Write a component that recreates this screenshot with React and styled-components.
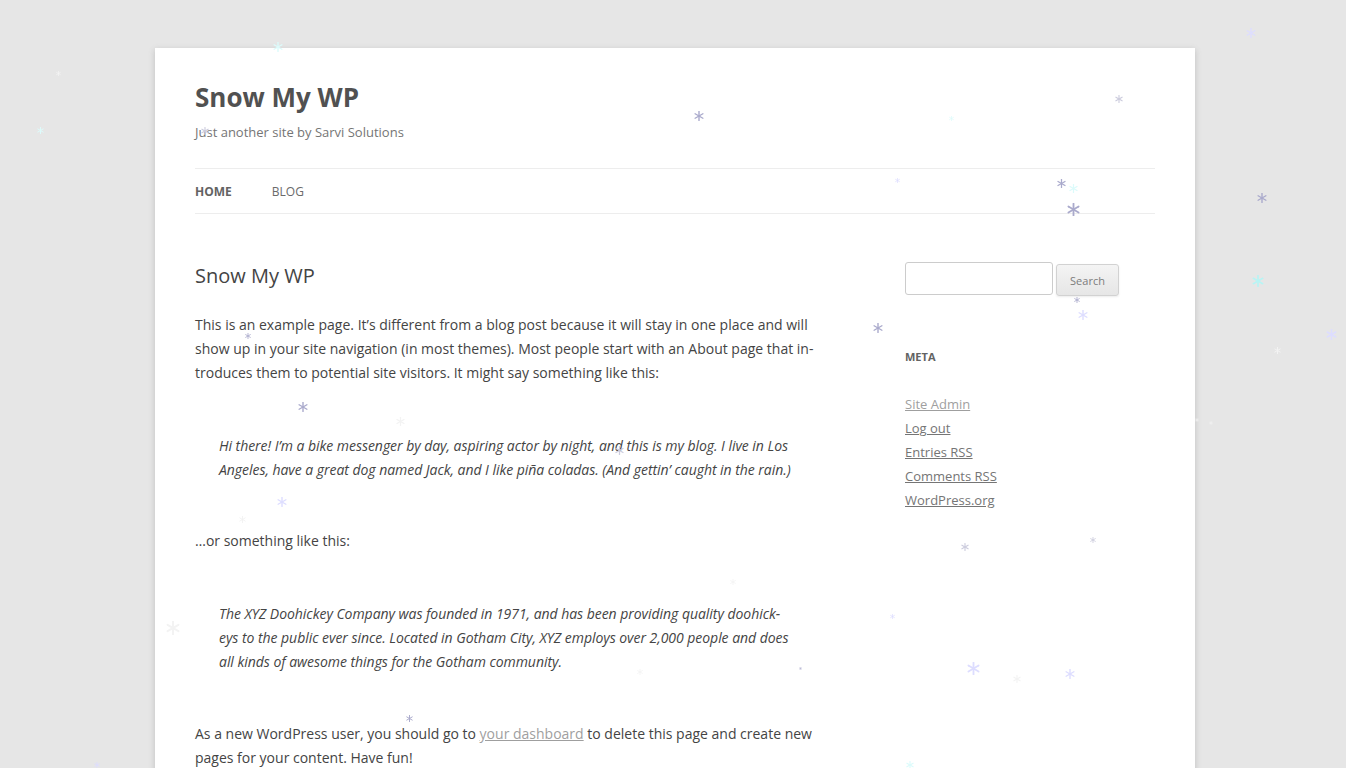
import React from 'react';
import styled, { createGlobalStyle } from 'styled-components';

const GlobalStyle = createGlobalStyle`
  html, body {
    margin: 0;
    padding: 0;
  }
  body {
    background: #e6e6e6;
    color: #444;
    font-family: "Open Sans", Helvetica, Arial, sans-serif;
    font-size: 14px;
    line-height: 1.714285714;
    overflow: hidden;
  }
`;

const Site = styled.div`
  width: 960px;
  margin: 48px 0 48px calc(50% - 518px);
  padding: 0 40px;
  background: #fff;
  box-shadow: 0 2px 6px rgba(100, 100, 100, 0.3);
`;

const Header = styled.header`
  padding: 24px 0;
`;

const SiteTitle = styled.h1`
  margin: 8px 0 6px;
  font-size: 26px;
  line-height: 34px;
  font-weight: 700;
  color: #515151;
`;

const Tagline = styled.h2`
  margin: 0;
  font-size: 13px;
  line-height: 24px;
  font-weight: 400;
  color: #757575;
`;

const Nav = styled.nav`
  margin-top: 24px;
  border-top: 1px solid #ededed;
  border-bottom: 1px solid #ededed;
  display: flex;
  gap: 40px;
`;

const NavItem = styled.a`
  padding-top: 1px;
  font-size: 12px;
  line-height: 43px;
  text-transform: uppercase;
  text-decoration: none;
  color: ${(p) => (p.$current ? '#636363' : '#6a6a6a')};
  font-weight: ${(p) => (p.$current ? 700 : 400)};
`;

const Main = styled.div`
  margin-top: 24px;
  display: flex;
  justify-content: space-between;
  align-items: flex-start;
`;

const Primary = styled.article`
  width: 625px;
`;

const EntryTitle = styled.h1`
  margin: 1px 0 24px;
  font-size: 20px;
  line-height: 26px;
  font-weight: 400;
  color: #444;
`;

const Para = styled.p`
  margin: 0 0 24px;
  white-space: nowrap;
`;

const Quote = styled.blockquote`
  margin: 0;
  padding: 25px 24px ${(p) => p.$bottom}px;
  font-style: italic;
  letter-spacing: -0.04px;
`;

const TextLink = styled.a`
  color: #9f9f9f;
  text-decoration: underline;
`;

const Sidebar = styled.aside`
  width: 250px;
`;

const SearchForm = styled.form`
  display: flex;
  align-items: flex-start;
  gap: 3px;
  margin-bottom: 49px;
`;

const SearchInput = styled.input`
  box-sizing: border-box;
  width: 148px;
  height: 33px;
  padding: 6px;
  border: 1px solid #ccc;
  border-radius: 3px;
  font-family: inherit;
  font-size: 13px;
  color: #444;
`;

const SearchButton = styled.button`
  box-sizing: border-box;
  margin-top: 2px;
  width: 63px;
  height: 32px;
  padding: 0 10px;
  font-family: inherit;
  font-size: 11px;
  color: #7c7c7c;
  background: linear-gradient(to bottom, #f4f4f4, #e6e6e6);
  border: 1px solid #d2d2d2;
  border-radius: 3px;
  box-shadow: 0 1px 2px rgba(64, 64, 64, 0.1);
`;

const WidgetTitle = styled.h3`
  margin: 0 0 23px;
  font-size: 11px;
  line-height: 24px;
  font-weight: 700;
  text-transform: uppercase;
  color: #636363;
`;

const WidgetList = styled.ul`
  margin: 0;
  padding: 0;
  list-style: none;
`;

const WidgetItem = styled.li`
  font-size: 13px;
  line-height: 24px;
`;

const WidgetLink = styled.a`
  color: ${(p) => (p.$visited ? '#9f9f9f' : '#757575')};
  text-decoration: underline;
`;

const Snow = styled.div`
  position: fixed;
  inset: 0;
  pointer-events: none;
  overflow: hidden;
`;

const Flake = styled.svg`
  position: absolute;
  left: ${(p) => p.$x - p.$s / 2}px;
  top: ${(p) => p.$y - p.$s / 2}px;
  width: ${(p) => p.$s}px;
  height: ${(p) => p.$s}px;
  color: ${(p) => p.$c};
`;

const A = '#aaaacc';
const D = '#ddddff';
const C = '#ccccdd';
const W = '#f3f3f3';
const Y = '#dcfbfb';
const YB = '#b8f4f4';

const flakes = [
  [278, 47, 10, Y], [58, 73, 5, W], [40, 130, 7, Y], [205, 131, 8, C],
  [699, 116, 10, A], [951, 118, 5, Y], [1119, 99, 8, C], [897, 180, 5, D],
  [1061, 183, 9, A], [1073, 188, 9, Y], [1073, 209, 13, A], [1251, 33, 10, D],
  [1262, 198, 10, A], [1258, 281, 12, YB], [1331, 334, 11, D], [1277, 350, 7, W],
  [1197, 420, 4, W], [1211, 423, 4, W], [1077, 300, 6, A], [1083, 315, 10, D],
  [878, 328, 10, A], [248, 336, 6, A], [303, 407, 10, A], [400, 421, 9, W],
  [619, 450, 9, C], [282, 502, 10, D], [242, 519, 7, W], [965, 547, 8, C],
  [1093, 540, 6, C], [733, 582, 6, W], [892, 616, 5, D], [173, 628, 14, W],
  [640, 672, 6, W], [800, 668, 3, A], [973, 668, 13, D], [1017, 679, 8, W],
  [1070, 674, 10, D], [409, 718, 7, A], [910, 765, 8, Y], [97, 765, 6, D],
];

const Asterisk = ({ x, y, s, c }) => (
  <Flake $x={x} $y={y} $s={s} $c={c} viewBox="-10 -10 20 20">
    <g stroke="currentColor" strokeWidth="2.8" strokeLinecap="round">
      <line x1="0" y1="-9" x2="0" y2="9" />
      <line x1="-7.8" y1="-4.5" x2="7.8" y2="4.5" />
      <line x1="-7.8" y1="4.5" x2="7.8" y2="-4.5" />
    </g>
  </Flake>
);

const metaLinks = [
  { label: 'Site Admin', visited: true },
  { label: 'Log out' },
  { label: 'Entries RSS' },
  { label: 'Comments RSS' },
  { label: 'WordPress.org' },
];

export default function App() {
  return (
    <>
      <GlobalStyle />
      <Site>
        <Header>
          <SiteTitle>Snow My WP</SiteTitle>
          <Tagline>Just another site by Sarvi Solutions</Tagline>
          <Nav>
            <NavItem href="#" $current>Home</NavItem>
            <NavItem href="#">Blog</NavItem>
          </Nav>
        </Header>
        <Main>
          <Primary>
            <EntryTitle>Snow My WP</EntryTitle>
            <Para>
              This is an example page. It’s different from a blog post because it will stay in one place and will
              <br />
              show up in your site navigation (in most themes). Most people start with an About page that in-
              <br />
              troduces them to potential site visitors. It might say something like this:
            </Para>
            <Quote $bottom={23}>
              <Para>
                Hi there! I’m a bike messenger by day, aspiring actor by night, and this is my blog. I live in Los
                <br />
                Angeles, have a great dog named Jack, and I like piña coladas. (And gettin’ caught in the rain.)
              </Para>
            </Quote>
            <Para>…or something like this:</Para>
            <Quote $bottom={24}>
              <Para>
                The XYZ Doohickey Company was founded in 1971, and has been providing quality doohick-
                <br />
                eys to the public ever since. Located in Gotham City, XYZ employs over 2,000 people and does
                <br />
                all kinds of awesome things for the Gotham community.
              </Para>
            </Quote>
            <Para>
              As a new WordPress user, you should go to <TextLink href="#">your dashboard</TextLink> to delete this page and create new
              <br />
              pages for your content. Have fun!
            </Para>
          </Primary>
          <Sidebar>
            <SearchForm onSubmit={(e) => e.preventDefault()}>
              <SearchInput type="text" />
              <SearchButton type="submit">Search</SearchButton>
            </SearchForm>
            <WidgetTitle>Meta</WidgetTitle>
            <WidgetList>
              {metaLinks.map((l) => (
                <WidgetItem key={l.label}>
                  <WidgetLink href="#" $visited={l.visited}>{l.label}</WidgetLink>
                </WidgetItem>
              ))}
            </WidgetList>
          </Sidebar>
        </Main>
      </Site>
      <Snow>
        {flakes.map(([x, y, s, c], i) => (
          <Asterisk key={i} x={x} y={y} s={s} c={c} />
        ))}
      </Snow>
    </>
  );
}
